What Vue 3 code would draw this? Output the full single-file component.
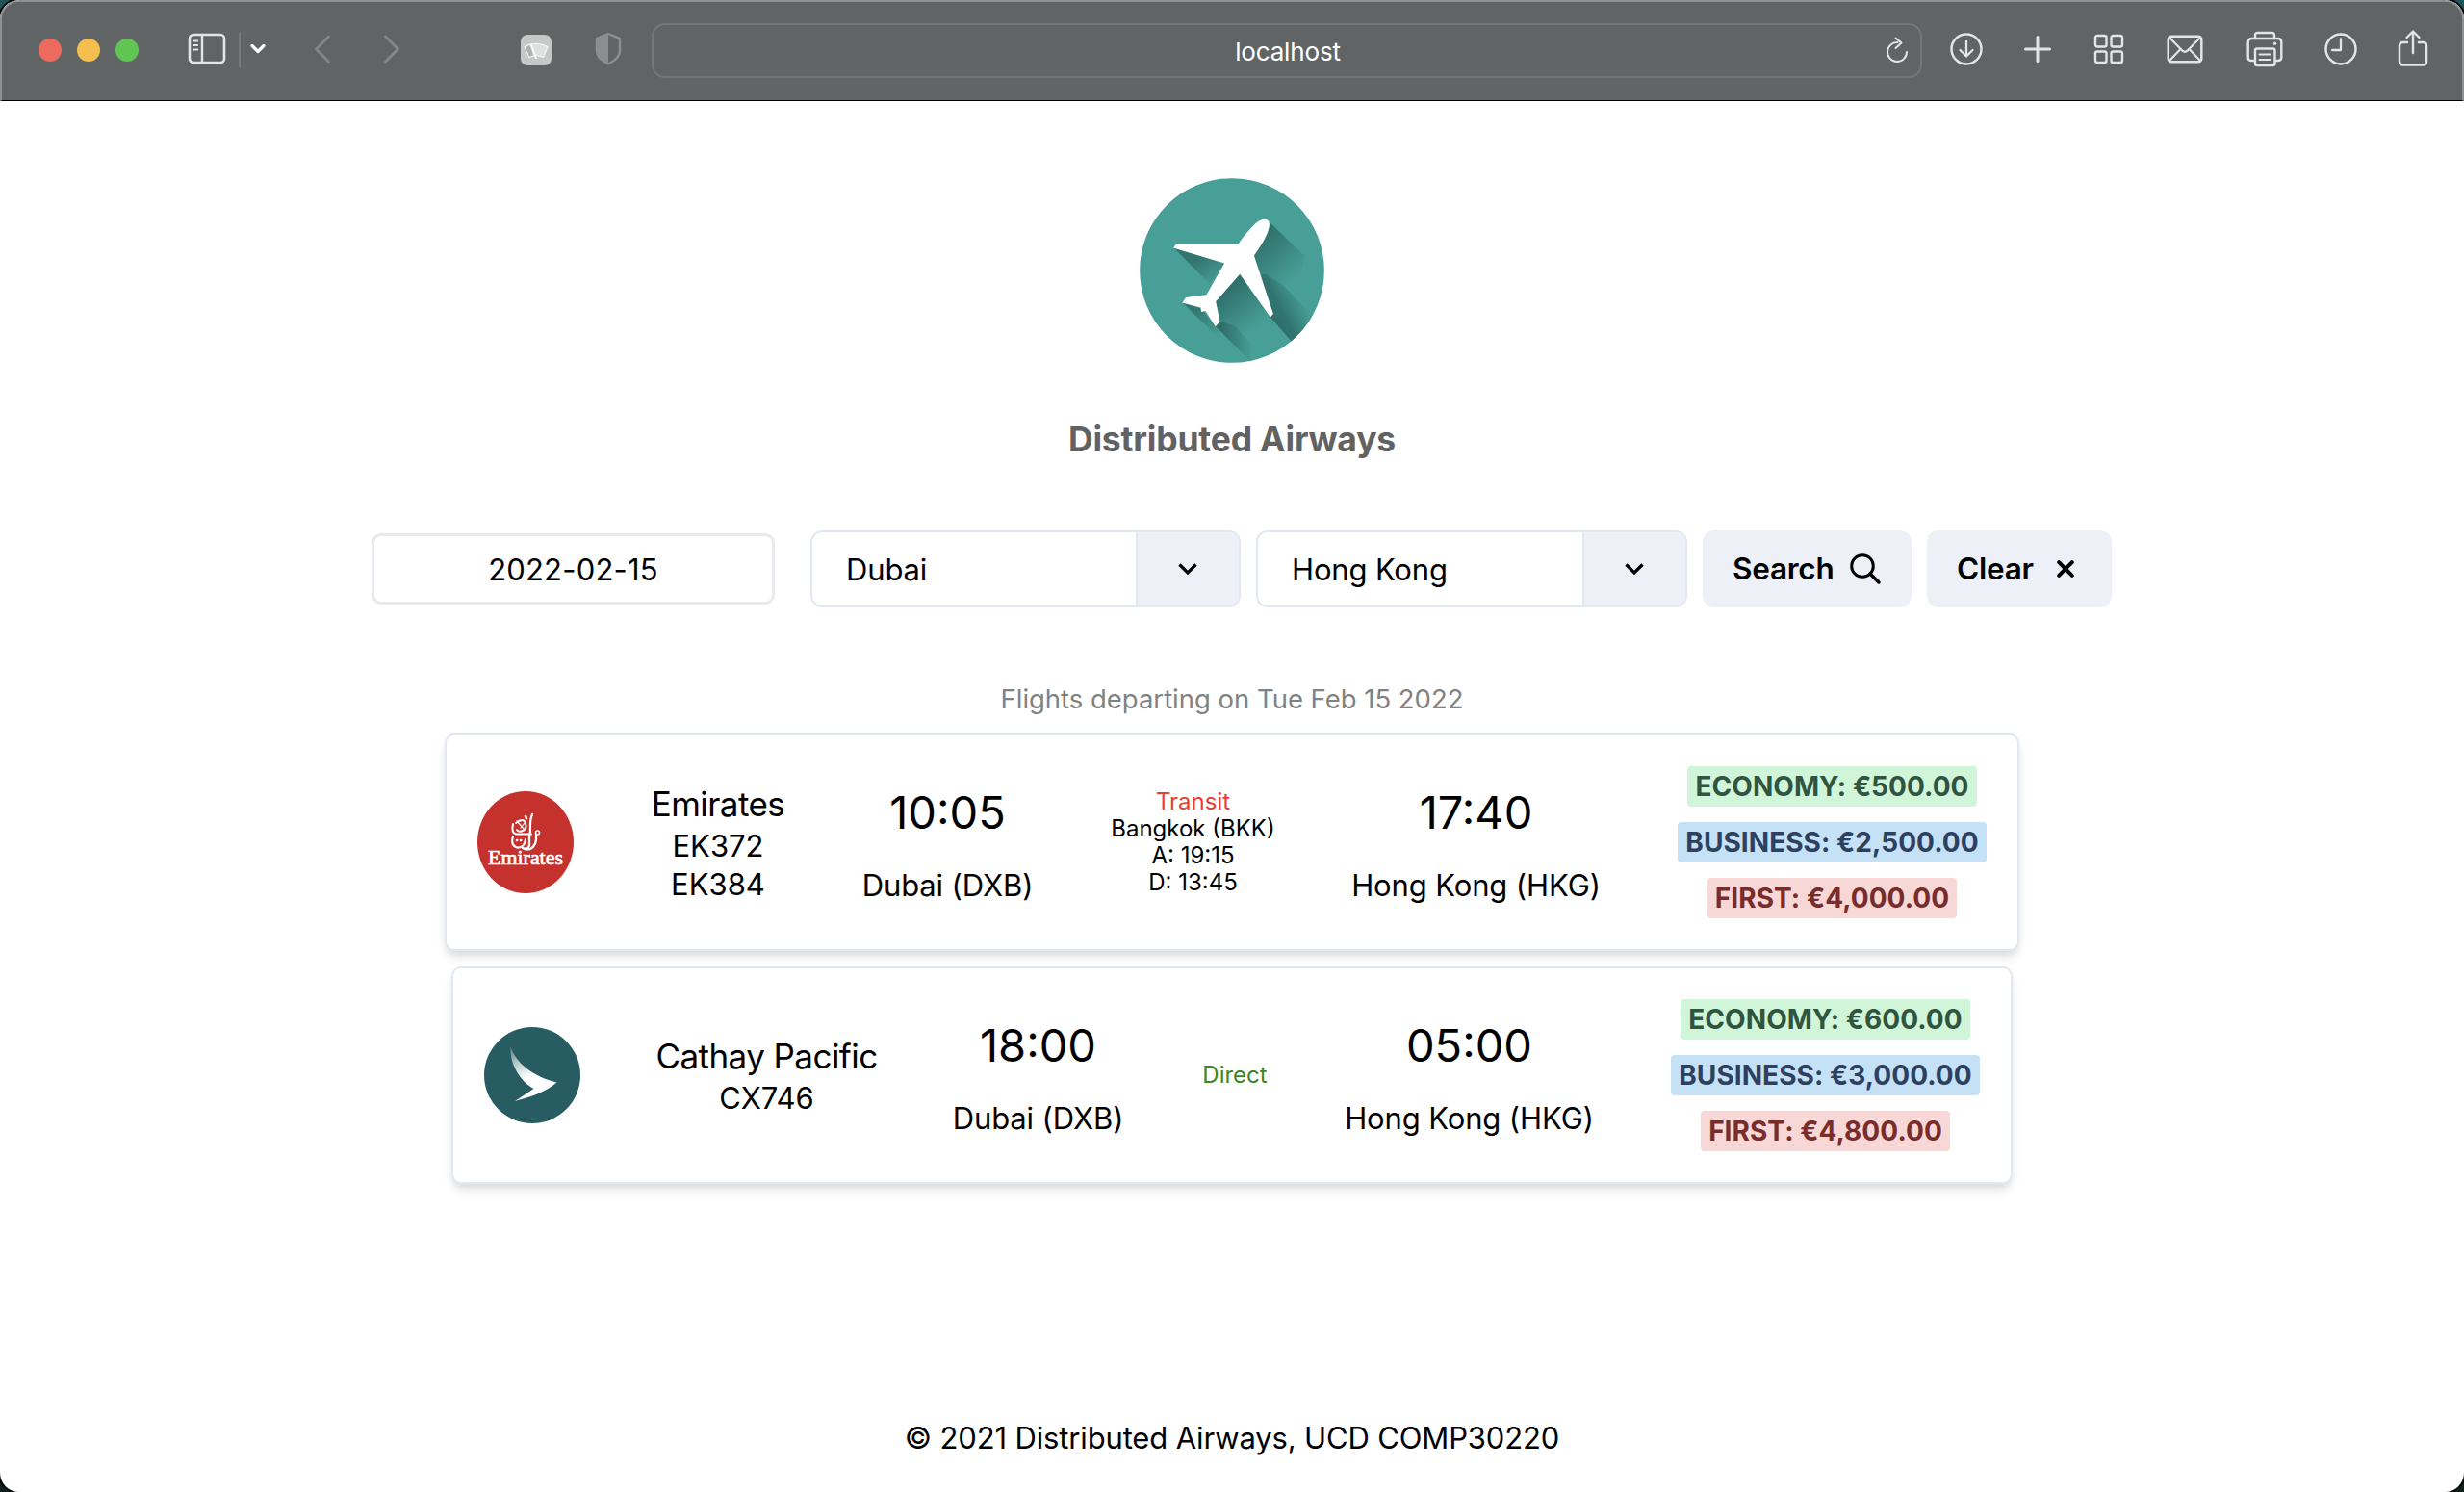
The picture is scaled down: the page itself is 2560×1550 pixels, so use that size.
<script setup>
const selects = [
  { id: 'from', value: 'Dubai', width: 447 },
  { id: 'to', value: 'Hong Kong', width: 448 },
]

const flights = [
  {
    id: 'emirates',
    airline: 'Emirates',
    codes: ['EK372', 'EK384'],
    departs: '10:05',
    from: 'Dubai (DXB)',
    transit: ['Bangkok (BKK)', 'A: 19:15', 'D: 13:45'],
    arrives: '17:40',
    to: 'Hong Kong (HKG)',
    prices: [
      { tone: 'green', label: 'Economy: €500.00' },
      { tone: 'blue', label: 'Business: €2,500.00' },
      { tone: 'red', label: 'First: €4,000.00' },
    ],
  },
  {
    id: 'cathay',
    airline: 'Cathay Pacific',
    codes: ['CX746'],
    departs: '18:00',
    from: 'Dubai (DXB)',
    transit: [],
    arrives: '05:00',
    to: 'Hong Kong (HKG)',
    prices: [
      { tone: 'green', label: 'Economy: €600.00' },
      { tone: 'blue', label: 'Business: €3,000.00' },
      { tone: 'red', label: 'First: €4,800.00' },
    ],
  },
]
</script>

<template>
  <div class="window">
    <header class="toolbar">
      <div class="lights">
        <i class="light red"></i>
        <i class="light yellow"></i>
        <i class="light green"></i>
      </div>
      <svg class="ic sidebar" width="40" height="34" viewBox="0 0 40 34">
        <rect x="2" y="2" width="36" height="29" rx="4" stroke-width="2.6" />
        <path d="M15 2v29" stroke-width="2.4" />
        <path d="M6.2 8.500h4M6.2 13h4M6.2 17.500h4" stroke-width="2" />
      </svg>
      <i class="divider"></i>
      <svg class="ic chev" width="16" height="12" viewBox="0 0 16 12">
        <path d="M2 2.500l6 6 6-6" stroke="#fff" stroke-width="3.200" />
      </svg>
      <svg class="ic back dim" width="20" height="32" viewBox="0 0 20 32">
        <path d="M16.500 3L3.500 16l13 13" stroke-width="2.600" />
      </svg>
      <svg class="ic fwd dim" width="20" height="32" viewBox="0 0 20 32">
        <path d="M3.500 3l13 13-13 13" stroke-width="2.600" />
      </svg>
      <svg class="ext" width="32" height="32" viewBox="0 0 32 32">
        <rect width="32" height="32" rx="7" fill="#c6c8c8" />
        <path d="M4 12.500Q16 6 28 12.500L23.500 23.500Q16 20 9 23.500Z" fill="#dfe0e0" stroke="#f6f6f6" stroke-width="1.200" stroke-linejoin="round" />
        <path d="M5 13l4.500-2 3.500 10.500-4 1.300z" fill="#b0b2b2" />
        <path d="M11 11l5 13.500" stroke="#fff" stroke-width="1.600" stroke-linecap="round" />
      </svg>
      <svg class="shield" width="30" height="36" viewBox="0 0 30 36">
        <path d="M15 2.200L27 7v13c0 5.500-6 10.500-12 13.500C9 30.500 3 25.500 3 20V7z" fill="none" stroke="#8b8e8e" stroke-width="2.500" stroke-linejoin="round" />
        <path d="M15 2.200v31.300C9 30.500 3 25.500 3 20V7z" fill="#8b8e8e" />
      </svg>
      <div class="address">
        <span class="host">localhost</span>
        <svg class="ic reload" width="24" height="28" viewBox="0 0 24 28">
          <path d="M12.500 6A10 10 0 1 0 22 16" stroke-width="2" />
          <path d="M10.500 1.500l6 5-6 5.500" stroke-width="2" />
        </svg>
      </div>
      <svg class="ic download" width="36" height="36" viewBox="0 0 36 36">
        <circle cx="18" cy="18" r="15.500" stroke-width="2.500" />
        <path d="M18 10v15M11.500 19l6.500 6.500 6.500-6.500" stroke-width="2.300" />
      </svg>
      <svg class="ic plus" width="30" height="30" viewBox="0 0 30 30">
        <path d="M15 2.500v25M2.500 15h25" stroke-width="3" />
      </svg>
      <svg class="ic tabs" width="32" height="32" viewBox="0 0 32 32">
        <g stroke-width="2.400">
          <rect x="2" y="2" width="11.500" height="11.500" rx="2" />
          <rect x="18.500" y="2" width="11.500" height="11.500" rx="2" />
          <rect x="2" y="18.500" width="11.500" height="11.500" rx="2" />
          <rect x="18.500" y="18.500" width="11.500" height="11.500" rx="2" />
        </g>
      </svg>
      <svg class="ic mail" width="38" height="30" viewBox="0 0 38 30">
        <rect x="1.700" y="1.700" width="34.600" height="26.600" rx="3.500" stroke-width="2.500" />
        <path d="M3.500 3.500l13 13.200q2.500 2.200 5 0l13-13.200M3.500 26.500L14.500 15M34.500 26.500L23.500 15" stroke-width="2.200" />
      </svg>
      <svg class="ic printer" width="38" height="38" viewBox="0 0 38 38">
        <path d="M9 8V4.500Q9 2 11.500 2h15Q29 2 29 4.500V8" stroke-width="2.400" />
        <path d="M8 31H5.500Q1.700 31 1.700 27.500V12Q1.700 8 5.500 8h27Q36.300 8 36.300 12v15.500Q36.300 31 32.500 31H30" stroke-width="2.400" />
        <rect x="9" y="18.500" width="20.500" height="17.500" rx="2" stroke-width="2.400" />
        <path d="M13.500 24.500h11.500M13.500 30h11.500" stroke-width="2" />
        <circle cx="29.500" cy="13.300" r="1.300" fill="#e3e4e4" stroke-width="1" />
      </svg>
      <svg class="ic clock" width="36" height="36" viewBox="0 0 36 36">
        <circle cx="18" cy="18" r="15.500" stroke-width="2.500" />
        <path d="M18 7.500V19H9" stroke-width="2.300" />
      </svg>
      <svg class="ic share" width="34" height="40" viewBox="0 0 34 40">
        <path d="M11 14H6.500Q3 14 3 17.500V34q0 3.500 3.500 3.500h21Q31 37.500 31 34V17.500Q31 14 27.500 14H23" stroke-width="2.500" />
        <path d="M17 25V3M10.500 9L17 2.500 23.500 9" stroke-width="2.400" />
      </svg>
    </header>

    <main class="page">
      <svg class="brand" width="192" height="192" viewBox="313 74 575 575">
        <defs>
          <linearGradient id="sh-wing" gradientUnits="userSpaceOnUse" x1="505" y1="315" x2="560" y2="400">
            <stop offset="0" stop-color="#32746f" /><stop offset="1" stop-color="#489f97" />
          </linearGradient>
          <linearGradient id="sh-nose" gradientUnits="userSpaceOnUse" x1="685" y1="255" x2="800" y2="385">
            <stop offset="0" stop-color="#2f6f6b" /><stop offset="1" stop-color="#489f97" />
          </linearGradient>
          <linearGradient id="sh-right" gradientUnits="userSpaceOnUse" x1="715" y1="480" x2="812" y2="430">
            <stop offset="0" stop-color="#2f6f6b" /><stop offset=".3" stop-color="#317470" /><stop offset="1" stop-color="#489f97" />
          </linearGradient>
          <linearGradient id="sh-body" gradientUnits="userSpaceOnUse" x1="575" y1="425" x2="670" y2="545">
            <stop offset="0" stop-color="#2f6f6b" /><stop offset="1" stop-color="#489f97" />
          </linearGradient>
          <linearGradient id="sh-tail" gradientUnits="userSpaceOnUse" x1="570" y1="560" x2="665" y2="560">
            <stop offset="0" stop-color="#2f6f6b" /><stop offset="1" stop-color="#489f97" />
          </linearGradient>
          <linearGradient id="sh-fin" gradientUnits="userSpaceOnUse" x1="490" y1="485" x2="555" y2="572">
            <stop offset="0" stop-color="#347873" /><stop offset="1" stop-color="#489f97" />
          </linearGradient>
          <clipPath id="disc"><circle cx="600.500" cy="361.500" r="287" /></clipPath>
        </defs>
        <circle cx="600.500" cy="361.500" r="287" fill="#489f97" />
        <g clip-path="url(#disc)">
          <path d="M420 292L532 404 577 338Z" fill="url(#sh-wing)" />
          <path d="M714 208L826 316 810 420 700 420 669 316Z" fill="url(#sh-nose)" />
          <path d="M690 375L705 372 760 408 850 500 850 560 800 599 720 507Z" fill="url(#sh-right)" />
          <path d="M625 373L720 507 700 570 600 570 563 520 550 458Z" fill="url(#sh-body)" />
          <path d="M563 518L549 536 660 645 690 620 610 535Z" fill="url(#sh-tail)" />
          <path d="M447 462L560 573 575 560 549 536 505 480Z" fill="url(#sh-fin)" />
        </g>
        <path d="M620 279C640 252 662 224 682 209C702 196 717 202 717 218C716 247 692 283 669 315L729 496 720 507 625 373 550 458 563 520 549 536 518 487 505 490 503 477 446 462 457 445 521 437 577 339 418 291 427 279Z" fill="#fff" />
      </svg>
      <h1 class="title">Distributed Airways</h1>

      <form class="filters" @submit.prevent>
        <div class="date">2022-02-15</div>
        <div v-for="s in selects" :key="s.id" class="select" :style="{ width: s.width + 'px' }">
          <span class="value">{{ s.value }}</span>
          <span class="toggle">
            <svg width="24" height="16" viewBox="0 0 24 16" fill="none">
              <path d="M3.500 3.500l8.500 8.500 8.500-8.500" stroke="#000" stroke-width="3.200" />
            </svg>
          </span>
        </div>
        <button class="btn search">
          <span>Search</span>
          <svg width="34" height="34" viewBox="0 0 34 34" fill="none" stroke="#000">
            <circle cx="14" cy="14" r="11.300" stroke-width="3" />
            <path d="M22 22l9 9" stroke-width="3.500" stroke-linecap="round" />
          </svg>
        </button>
        <button class="btn clear">
          <span>Clear</span>
          <svg width="18" height="18" viewBox="0 0 18 18" fill="none" stroke="#000">
            <path d="M2.200 2.200l13.600 13.600M15.800 2.200L2.200 15.800" stroke-width="4" stroke-linecap="round" />
          </svg>
        </button>
      </form>

      <p class="caption">Flights departing on Tue Feb 15 2022</p>

      <section class="results">
        <article v-for="f in flights" :key="f.id" class="card" :class="f.id">
          <svg v-if="f.id === 'emirates'" class="logo" width="100" height="106" viewBox="0 0 100 106">
            <ellipse cx="50" cy="53" rx="50" ry="53" fill="#c5312d" />
            <g fill="none" stroke="#fff" stroke-linecap="round">
              <path d="M57 24C54 31 55 38 55 43" stroke-width="2.200" />
              <path d="M40 33Q48 27 50 33T47 41Q43 43 41 40" stroke-width="2" />
              <path d="M41 31l8 9M45 38l4-5" stroke-width="1.200" />
              <path d="M37 34Q35 43 40 44.500H56" stroke-width="2" />
              <path d="M37 47Q34 56 41 58.500Q49 59 50 50" stroke-width="2.200" />
              <path d="M54 44V53Q55 59 50 59.500M61 46Q62 56 55 60Q50 61 47 59" stroke-width="2.300" />
              <path d="M41 51h.2M45 51h.2M50 26l1 2" stroke-width="2.600" />
              <circle cx="62.500" cy="43" r="2" stroke-width="1.600" />
            </g>
            <text x="11" y="76" class="wordmark" textLength="78" lengthAdjust="spacingAndGlyphs">Emirates</text>
          </svg>
          <svg v-else class="logo" width="100" height="100" viewBox="0 0 100 100">
            <defs>
              <linearGradient id="brush" gradientUnits="userSpaceOnUse" x1="28" y1="18" x2="45" y2="52">
                <stop offset="0" stop-color="#fff" stop-opacity=".15" />
                <stop offset=".5" stop-color="#fff" stop-opacity=".65" />
                <stop offset="1" stop-color="#fff" />
              </linearGradient>
            </defs>
            <circle cx="50" cy="50" r="50" fill="#265c62" />
            <path d="M27.500 20C32 37 52 52 75.500 57.500C65 67 50 72 32 77L51.500 64C38 57 26 38 27.500 20Z" fill="url(#brush)" />
          </svg>

          <div class="carrier">
            <div class="airline">{{ f.airline }}</div>
            <div v-for="c in f.codes" :key="c" class="code">{{ c }}</div>
          </div>
          <div class="stop">
            <div class="time">{{ f.departs }}</div>
            <div class="place">{{ f.from }}</div>
          </div>
          <div class="via">
            <template v-if="f.transit.length">
              <div class="transit">Transit</div>
              <div v-for="t in f.transit" :key="t">{{ t }}</div>
            </template>
            <div v-else class="direct">Direct</div>
          </div>
          <div class="stop">
            <div class="time">{{ f.arrives }}</div>
            <div class="place">{{ f.to }}</div>
          </div>
          <div class="prices">
            <span v-for="p in f.prices" :key="p.tone" class="badge" :class="p.tone">{{ p.label }}</span>
          </div>
        </article>
      </section>

      <footer class="foot">© 2021 Distributed Airways, UCD COMP30220</footer>
    </main>
  </div>
</template>

<style>
body {
  background: linear-gradient(#1d5358 0, #1d5358 50%, #10201f 50%);
}
</style>

<style scoped>
* {
  box-sizing: border-box;
}
.window {
  width: 2560px;
  height: 1550px;
  overflow: hidden;
  border-radius: 20px;
  background: #fff;
  box-shadow: 0 0 0 2px #000;
  color: #000;
  font-family: Inter, 'Liberation Sans', sans-serif;
  font-size: 31px;
  white-space: nowrap;
}
.toolbar {
  display: flex;
  align-items: center;
  height: 105px;
  padding: 0 0 4px 38px;
  background: #606464;
  border: 2px solid #8d9090;
  border-bottom: 1px solid #000;
  border-radius: 20px 20px 0 0;
}
.toolbar svg {
  flex: none;
}
.ic {
  fill: none;
  stroke: #e3e4e4;
  stroke-linecap: round;
  stroke-linejoin: round;
}
.dim {
  stroke: #858888;
}
.lights {
  display: flex;
  gap: 16px;
  margin-top: 2px;
}
.light {
  width: 24px;
  height: 24px;
  border-radius: 50%;
}
.light.red { background: #ec6a5e; }
.light.yellow { background: #f4bf4f; }
.light.green { background: #61c554; }
.sidebar { margin-left: 51px; }
.divider {
  width: 2px;
  height: 36px;
  margin: 2px 0 0 13px;
  background: #767a7a;
}
.chev { margin-left: 10px; }
.back { margin-left: 49px; }
.fwd { margin-left: 52px; }
.ext { margin: 2px 0 0 124px; }
.shield { margin-left: 44px; }
.address {
  display: flex;
  align-items: center;
  justify-content: flex-end;
  width: 1320px;
  height: 57px;
  margin: 2px 0 0 30px;
  padding-right: 12px;
  border: 2px solid #747777;
  border-radius: 14px;
  flex: none;
}
.host {
  flex: 1;
  padding: 2px 0 0 38px;
  color: #fff;
  font-size: 26px;
  letter-spacing: -0.15px;
  text-align: center;
}
.download { margin-left: 28px; }
.plus { margin-left: 41px; }
.tabs { margin-left: 43px; }
.mail { margin-left: 44px; }
.printer { margin-left: 45px; }
.clock { margin-left: 42px; }
.share { margin: 0 0 3px 40px; }

.page {
  display: flex;
  flex-direction: column;
  align-items: center;
}
.brand { margin-top: 79.500px; }
.title {
  margin: 58.500px 0 0;
  color: #626262;
  font-size: 35.500px;
  font-weight: 700;
  letter-spacing: -0.2px;
  line-height: 44px;
}
.filters {
  display: flex;
  align-items: center;
  align-self: flex-start;
  gap: 16px;
  height: 80px;
  margin: 72px 0 0 386px;
}
.date {
  width: 419px;
  height: 74px;
  margin-right: 21px;
  border: 3px solid #e9e9ee;
  border-radius: 10px;
  letter-spacing: 0.2px;
  line-height: 69px;
  text-align: center;
}
.select {
  display: flex;
  height: 80px;
  overflow: hidden;
  border: 2px solid #e2e8f0;
  border-radius: 12px;
}
.value {
  flex: 1;
  padding-left: 35px;
  letter-spacing: -0.15px;
  line-height: 78px;
}
.toggle {
  display: flex;
  align-items: center;
  justify-content: center;
  width: 107px;
  padding-right: 2px;
  border-left: 2px solid #e2e8f0;
  background: #edf0f6;
}
.btn {
  display: flex;
  align-items: center;
  height: 80px;
  padding: 0 0 0 31px;
  border: 0;
  border-radius: 12px;
  background: #edf0f6;
  color: #000;
  font: 600 31.500px/76px Inter, sans-serif;
  letter-spacing: -0.25px;
  text-align: left;
}
.search { width: 217px; }
.clear { width: 192px; }
.search span { width: 121px; }
.clear span { width: 104px; }
.caption {
  margin: 76.500px 0 0;
  color: #828282;
  font-size: 27.500px;
  letter-spacing: -0.02px;
  line-height: 36px;
}
.results {
  display: flex;
  flex-direction: column;
  align-items: center;
  gap: 16px;
  margin-top: 18.500px;
}
.card {
  display: grid;
  column-gap: 80px;
  align-items: center;
  justify-items: center;
  height: 226px;
  padding: 0 32px;
  border: 2px solid #e2e8f0;
  border-radius: 10px;
  background: #fff;
  box-shadow: 0 8px 12px -2px rgba(0, 0, 0, 0.1), 0 4px 8px -2px rgba(0, 0, 0, 0.08);
  text-align: center;
}
.card > div {
  display: flex;
  flex-direction: column;
  align-items: center;
}
.emirates { grid-template-columns: 100px 140px 177px 171px 259px 321px; }
.cathay { grid-template-columns: 100px 227px 177px 70px 259px 321px; }
.wordmark {
  fill: #fff;
  stroke: #fff;
  stroke-width: 0.7px;
  font: 22px 'Liberation Serif', serif;
}
.airline {
  font-size: 35px;
  letter-spacing: -0.55px;
  line-height: 47px;
}
.code { line-height: 40px; }
.time {
  font-size: 47px;
  line-height: 62px;
}
.place {
  margin-top: 27px;
  letter-spacing: -0.12px;
  line-height: 36px;
}
.via {
  position: relative;
  left: 1px;
  font-size: 24px;
  line-height: 28px;
}
.transit { color: #ea3d2f; }
.direct { color: #3b8724; }
.card > .prices { gap: 16px; }
.badge {
  height: 42px;
  padding: 0 8px;
  border-radius: 4px;
  font-size: 28px;
  font-weight: 700;
  line-height: 42px;
  letter-spacing: 0.05px;
  text-transform: uppercase;
}
.badge.green { background: #d0f5d9; color: #2f5440; }
.badge.blue { background: #c5e1f6; color: #2d4060; }
.badge.red { background: #f8d7d7; color: #782c2b; }
.foot {
  margin-top: 244px;
  letter-spacing: -0.15px;
  line-height: 40px;
}
</style>
